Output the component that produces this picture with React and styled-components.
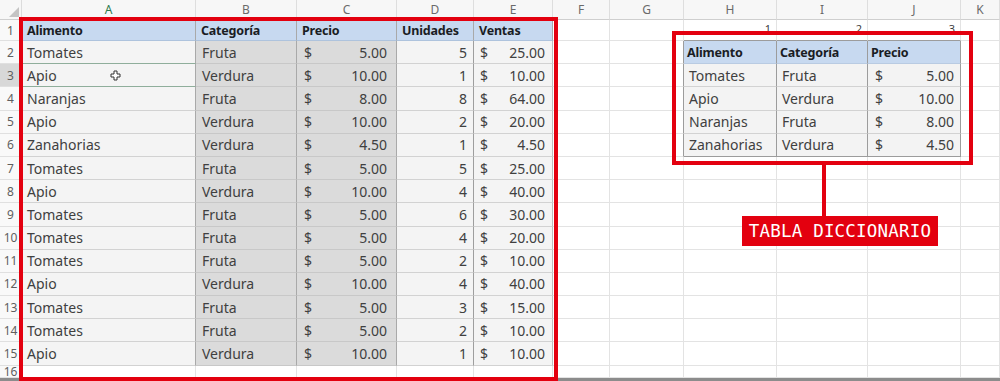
import React from "react";
import styled, { createGlobalStyle } from "styled-components";

const GlobalStyle = createGlobalStyle`
  html, body {
    margin: 0;
    padding: 0;
    background: #ffffff;
    overflow: hidden;
  }
  body {
    font-family: "Noto Sans", "Open Sans", Arial, sans-serif;
  }
`;

const COLS = ["A", "B", "C", "D", "E", "F", "G", "H", "I", "J", "K"];

const Page = styled.div`
  width: 1000px;
  height: 381px;
  position: relative;
  overflow: hidden;
  background: #fff;
`;

const Sheet = styled.div`
  display: grid;
  grid-template-columns: 22px 174px 101px 100px 77px 79px 57px 74px 93px 91px 93px 1fr;
  grid-template-rows: 20px 21px repeat(14, 23.2px) 12px;
`;

const Corner = styled.div`
  box-sizing: border-box;
  background: #f7f7f7;
  border-right: 1px solid #dcdcdc;
  border-bottom: 1px solid #cfcfcf;
  position: relative;
  &::after {
    content: "";
    position: absolute;
    right: 2px;
    bottom: 2px;
    border-left: 10px solid transparent;
    border-bottom: 10px solid #c4c4c4;
  }
`;

const ColHead = styled.div`
  box-sizing: border-box;
  display: flex;
  align-items: center;
  justify-content: center;
  background: #f7f7f7;
  border-right: 1px solid #dedede;
  border-bottom: 1px solid #cfcfcf;
  font-size: 12px;
  color: ${(p) => (p.$active ? "#2a7a4c" : "#6a6a6a")};
`;

const RowHead = styled.div`
  box-sizing: border-box;
  display: flex;
  align-items: center;
  justify-content: center;
  background: ${(p) => (p.$active ? "#d8d8d8" : "#f9f9f9")};
  border-right: 1px solid #cfcfcf;
  border-bottom: 1px solid #e0e0e0;
  font-size: 12px;
  color: #5f5f5f;
`;

const Cell = styled.div`
  box-sizing: border-box;
  position: relative;
  display: flex;
  align-items: ${(p) => (p.$top ? "flex-start" : "center")};
  justify-content: ${(p) => (p.$align === "right" ? "flex-end" : "flex-start")};
  padding: ${(p) => (p.$top ? 1 : 0)}px ${(p) => p.$padR ?? 4}px 0 ${(p) => p.$padL ?? 5}px;
  background: ${(p) => p.$bg || "#fff"};
  border-right: 1px solid ${(p) => p.$lineR || "#e3e3e3"};
  border-bottom: 1px solid ${(p) => p.$lineB || "#e3e3e3"};
  font-weight: ${(p) => (p.$bold ? 700 : 400)};
  font-size: ${(p) => p.$size || 14}px;
  color: ${(p) => (p.$bold ? "#1a1d24" : "#404040")};
  white-space: nowrap;
  overflow: visible;
  letter-spacing: ${(p) => (p.$bold ? "-0.2px" : "0")};
`;

const Money = styled.div`
  display: flex;
  justify-content: space-between;
  width: 100%;
`;

const BottomBar = styled.div`
  height: 3px;
  background: #8c8c8c;
`;

const RedFrame = styled.div`
  position: absolute;
  box-sizing: border-box;
  left: 19px;
  top: 17px;
  width: 539px;
  height: 364px;
  border: 4px solid #e3000f;
  pointer-events: none;
`;

/* callout over the dictionary table: frame, stem and tag stacked by flow */
const Callout = styled.div`
  position: absolute;
  left: 672px;
  top: 31px;
  width: 301px;
  display: flex;
  flex-direction: column;
  pointer-events: none;
`;

const CalloutFrame = styled.div`
  box-sizing: border-box;
  height: 134px;
  border: 4px solid #e3000f;
`;

const Stem = styled.div`
  width: 4px;
  height: 51px;
  margin-left: 150px;
  background: #e3000f;
`;

const Tag = styled.div`
  box-sizing: border-box;
  width: 196px;
  height: 30px;
  margin-left: 70px;
  background: #e3000f;
  color: #fff;
  display: flex;
  align-items: center;
  justify-content: center;
  font-family: "DejaVu Sans Mono", "Liberation Mono", monospace;
  font-size: 17.5px;
  letter-spacing: 0.2px;
`;

const Cursor = styled.svg`
  position: absolute;
  left: 88px;
  top: 6px;
`;

const data = [
  ["Tomates", "Fruta", 5, 5],
  ["Apio", "Verdura", 10, 1],
  ["Naranjas", "Fruta", 8, 8],
  ["Apio", "Verdura", 10, 2],
  ["Zanahorias", "Verdura", 4.5, 1],
  ["Tomates", "Fruta", 5, 5],
  ["Apio", "Verdura", 10, 4],
  ["Tomates", "Fruta", 5, 6],
  ["Tomates", "Fruta", 5, 4],
  ["Tomates", "Fruta", 5, 2],
  ["Apio", "Verdura", 10, 4],
  ["Tomates", "Fruta", 5, 3],
  ["Tomates", "Fruta", 5, 2],
  ["Apio", "Verdura", 10, 1],
];

const dict = [
  ["Tomates", "Fruta", 5],
  ["Apio", "Verdura", 10],
  ["Naranjas", "Fruta", 8],
  ["Zanahorias", "Verdura", 4.5],
];

const HEAD_BG = "#c7d9f0";
const LIGHT = "#f4f4f4";
const GREY = "#dbdbdb";
const ROW_LINE = "#d2d2d2";
const COL_LINE = "#a9a9a9";
const DICT_LINE = "#9c9c9c";

const fmt = (n) => n.toFixed(2);

const money = (v) => (
  <Money>
    <span>$</span>
    <span>{fmt(v)}</span>
  </Money>
);

const moveCursor = (
  <Cursor width="11" height="11" viewBox="0 0 11 11">
    <path
      d="M4 1h3v3h3v3H7v3H4V7H1V4h3z"
      fill="#ffffff"
      stroke="#333"
      strokeWidth="1"
      strokeLinejoin="round"
    />
  </Cursor>
);

// builds the props + content for one cell of the sheet
function cellFor(r, c) {
  const col = COLS[c];
  // left table A1:E15
  if (r === 1 && c <= 4) {
    const names = ["Alimento", "Categoría", "Precio", "Unidades", "Ventas"];
    return {
      props: { $bg: HEAD_BG, $bold: true, $size: 12.5, $lineR: COL_LINE, $lineB: "#aec3dd" },
      content: names[c],
    };
  }
  if (r >= 2 && r <= 15 && c <= 4) {
    const [food, cat, price, units] = data[r - 2];
    const lineB = col === "A" && (r === 2 || r === 3) ? "#8fae9b" : ROW_LINE;
    if (col === "A")
      return {
        props: { $bg: LIGHT, $lineR: COL_LINE, $lineB: lineB },
        content: (
          <>
            {food}
            {r === 3 && moveCursor}
          </>
        ),
      };
    if (col === "B") return { props: { $bg: GREY, $lineR: COL_LINE, $lineB: "#c8c8c8", $padL: 6 }, content: cat };
    if (col === "C")
      return { props: { $bg: GREY, $lineR: COL_LINE, $lineB: "#c8c8c8", $padL: 7, $padR: 9 }, content: money(price) };
    if (col === "D")
      return { props: { $bg: LIGHT, $lineR: "#9e9e9e", $lineB: ROW_LINE, $align: "right", $padR: 6 }, content: units };
    return { props: { $bg: LIGHT, $lineR: "#bdbdbd", $lineB: ROW_LINE, $padL: 6, $padR: 7 }, content: money(price * units) };
  }
  // small index numbers above the dictionary table
  if (r === 1 && c >= 7 && c <= 9) {
    return {
      props: { $align: "right", $size: 11, $padR: 5, $top: true, $lineB: DICT_LINE },
      content: String(c - 6),
    };
  }
  // dictionary table H2:J6
  if (r >= 2 && r <= 6 && c >= 7 && c <= 9) {
    const last = r === 6;
    if (r === 2) {
      const names = ["Alimento", "Categoría", "Precio"];
      return {
        props: { $bg: HEAD_BG, $bold: true, $size: 12.5, $lineR: DICT_LINE, $lineB: "#b9cbe2", $padL: 3 },
        content: names[c - 7],
      };
    }
    const [food, cat, price] = dict[r - 3];
    const base = { $bg: "#f3f3f3", $lineR: DICT_LINE, $lineB: last ? DICT_LINE : ROW_LINE };
    if (c === 7) return { props: { ...base, $padL: 5 }, content: food };
    if (c === 8) return { props: { ...base, $padL: 5 }, content: cat };
    return { props: { ...base, $padL: 7, $padR: 6 }, content: money(price) };
  }
  // plain empty cells
  const props = {};
  if (c === 6 && r >= 2 && r <= 6) props.$lineR = DICT_LINE;
  return { props, content: null };
}

export default function App() {
  const rows = [];
  for (let r = 1; r <= 16; r++) {
    rows.push(
      <RowHead key={`h${r}`} $active={r === 3}>
        {r}
      </RowHead>
    );
    COLS.forEach((_, c) => {
      const { props, content } = cellFor(r, c);
      rows.push(
        <Cell key={`${r}-${c}`} {...props}>
          {content}
        </Cell>
      );
    });
  }

  return (
    <Page>
      <GlobalStyle />
      <Sheet>
        <Corner />
        {COLS.map((l) => (
          <ColHead key={l} $active={l === "A"}>
            {l}
          </ColHead>
        ))}
        {rows}
      </Sheet>
      <BottomBar />

      <RedFrame />
      <Callout>
        <CalloutFrame />
        <Stem />
        <Tag>TABLA DICCIONARIO</Tag>
      </Callout>
    </Page>
  );
}
